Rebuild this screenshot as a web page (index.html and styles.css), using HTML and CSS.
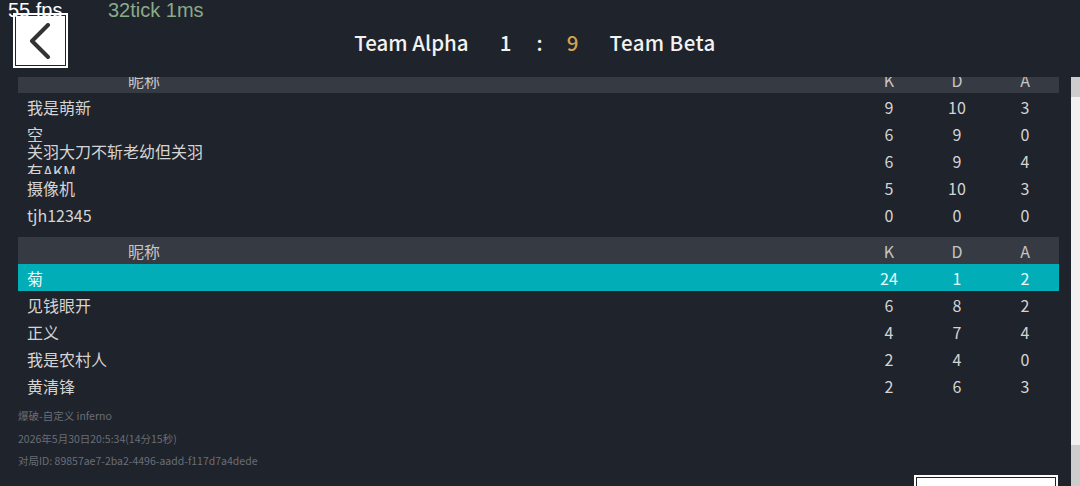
FILE: index.html
```html
<!DOCTYPE html>
<html lang="zh-CN">
<head>
    <meta charset="UTF-8">
    <meta name="viewport" content="width=device-width, initial-scale=1.0">
    <title>对局结算</title>
    <link rel="stylesheet" href="styles.css">
</head>
<body>
    <div class="stats-overlay">
        <span class="fps">55 fps</span>
        <span class="tick">32tick 1ms</span>
    </div>

    <header class="topbar">
        <button class="back-button" aria-label="返回">
            <svg width="24" height="36" viewBox="0 0 24 36">
                <path d="M20 2 L4 18 L20 34" fill="none" stroke="#333" stroke-width="4" stroke-linecap="round" stroke-linejoin="round"/>
            </svg>
        </button>
        <h1 class="score">
            <span class="team">Team Alpha</span>
            <span class="num">1</span>
            <span class="colon">:</span>
            <span class="num win">9</span>
            <span class="team">Team Beta</span>
        </h1>
    </header>

    <div class="board">
        <div class="scroll-view">
            <div class="scroll-content">
                <div class="team-table">
                    <div class="row head">
                        <div class="name">昵称</div><div></div><div>K</div><div>D</div><div>A</div>
                    </div>
                    <div class="row">
                        <div class="name"><span>我是萌新</span></div><div></div><div>9</div><div>10</div><div>3</div>
                    </div>
                    <div class="row">
                        <div class="name"><span>空</span></div><div></div><div>6</div><div>9</div><div>0</div>
                    </div>
                    <div class="row">
                        <div class="name"><span>关羽大刀不斩老幼但关羽有AKM</span></div><div></div><div>6</div><div>9</div><div>4</div>
                    </div>
                    <div class="row">
                        <div class="name"><span>摄像机</span></div><div></div><div>5</div><div>10</div><div>3</div>
                    </div>
                    <div class="row">
                        <div class="name"><span>tjh12345</span></div><div></div><div>0</div><div>0</div><div>0</div>
                    </div>
                </div>

                <div class="team-table">
                    <div class="row head">
                        <div class="name">昵称</div><div></div><div>K</div><div>D</div><div>A</div>
                    </div>
                    <div class="row self">
                        <div class="name"><span>菊</span></div><div></div><div>24</div><div>1</div><div>2</div>
                    </div>
                    <div class="row">
                        <div class="name"><span>见钱眼开</span></div><div></div><div>6</div><div>8</div><div>2</div>
                    </div>
                    <div class="row">
                        <div class="name"><span>正义</span></div><div></div><div>4</div><div>7</div><div>4</div>
                    </div>
                    <div class="row">
                        <div class="name"><span>我是农村人</span></div><div></div><div>2</div><div>4</div><div>0</div>
                    </div>
                    <div class="row">
                        <div class="name"><span>黄清锋</span></div><div></div><div>2</div><div>6</div><div>3</div>
                    </div>
                </div>

                <div class="match-info">
                    <p>爆破-自定义 inferno</p>
                    <p>2026年5月30日20:5:34(14分15秒)</p>
                    <p>对局ID: 89857ae7-2ba2-4496-aadd-f117d7a4dede</p>
                </div>

                <div class="actions">
                    <button class="wide-button"></button>
                </div>
            </div>
        </div>
        <div class="scrollbar">
            <div class="thumb"></div>
        </div>
    </div>
</body>
</html>
```

FILE: styles.css
```css
* {
    margin: 0;
    padding: 0;
    box-sizing: border-box;
}

body {
    width: 1080px;
    height: 486px;
    overflow: hidden;
    background: #1f232c;
    color: #d4d4d4;
    font-family: "Noto Sans CJK SC", "Noto Sans", sans-serif;
    position: relative;
}

/* debug counters drawn over the page */
.stats-overlay {
    position: absolute;
    top: -1px;
    left: 8px;
    z-index: 10;
    display: flex;
    font-family: "Liberation Sans", Arial, sans-serif;
    font-size: 20px;
    line-height: 23px;
}

.fps {
    color: #ffffff;
    width: 100px;
}

.tick {
    color: #8aab88;
}

.topbar {
    height: 77px;
    display: flex;
    align-items: flex-start;
    position: relative;
}

.back-button {
    width: 55px;
    height: 55px;
    margin: 13px 0 0 13px;
    border: 2px solid #fff;
    padding: 1px;
    background: #fff;
    background-clip: content-box;
    display: flex;
    align-items: center;
    justify-content: center;
}

.back-button svg {
    margin-left: -1px;
}

.score {
    position: absolute;
    left: 0;
    right: 0;
    top: 27px;
    display: flex;
    justify-content: center;
    align-items: center;
    font-size: 20.5px;
    font-weight: 500;
    line-height: 30px;
    color: #f2f2f2;
    padding-right: 10px;
}

.score .num {
    width: 20px;
    text-align: center;
}

.score .colon {
    width: 14px;
    text-align: center;
    margin: 0 16px 0 17px;
}

.score .team:first-child {
    margin-right: 27px;
}

.score .team:last-child {
    margin-left: 27px;
    letter-spacing: 0.4px;
}

.score .win {
    color: #cfa44f;
}

.board {
    height: 409px;
    display: flex;
}

.scroll-view {
    flex: 1;
    overflow: hidden;
    padding: 0 12px 0 18px;
}

.scroll-content {
    margin-top: -11px;
}

.team-table {
    margin-bottom: 9px;
}

/* each row paints over the overflow of the one before it */
.row {
    display: grid;
    grid-template-columns: 252px 1fr 68px 68px 68px;
    grid-template-rows: 27px;
    height: 27px;
    align-items: center;
    text-align: center;
    font-size: 16px;
    line-height: 20px;
    background: #1f232c;
    position: relative;
    isolation: isolate;
}

.row .name {
    text-align: left;
    padding-left: 9px;
}

.row .name span {
    display: block;
    max-width: 184px;
}

.row.head {
    background: #363a43;
    color: #c6c6c6;
}

.row.head .name {
    text-align: center;
    padding-left: 0;
}

.row.self {
    background: #01adb6;
    color: #e6fbfb;
}

.match-info {
    margin-top: -7px;
    padding-top: 4px;
    font-size: 10.5px;
    line-height: 22.5px;
    color: #6a6e77;
}

.actions {
    display: flex;
    justify-content: flex-end;
    margin-top: 2px;
    padding-right: 1px;
}

.wide-button {
    width: 144px;
    height: 40px;
    border: 2px solid #fff;
    padding: 1px;
    background: #fff;
    background-clip: content-box;
}

.scrollbar {
    width: 9px;
    background: #cdcdcd;
    padding-top: 20px;
}

.thumb {
    height: 348px;
    background: #f1f1f1;
}
```
